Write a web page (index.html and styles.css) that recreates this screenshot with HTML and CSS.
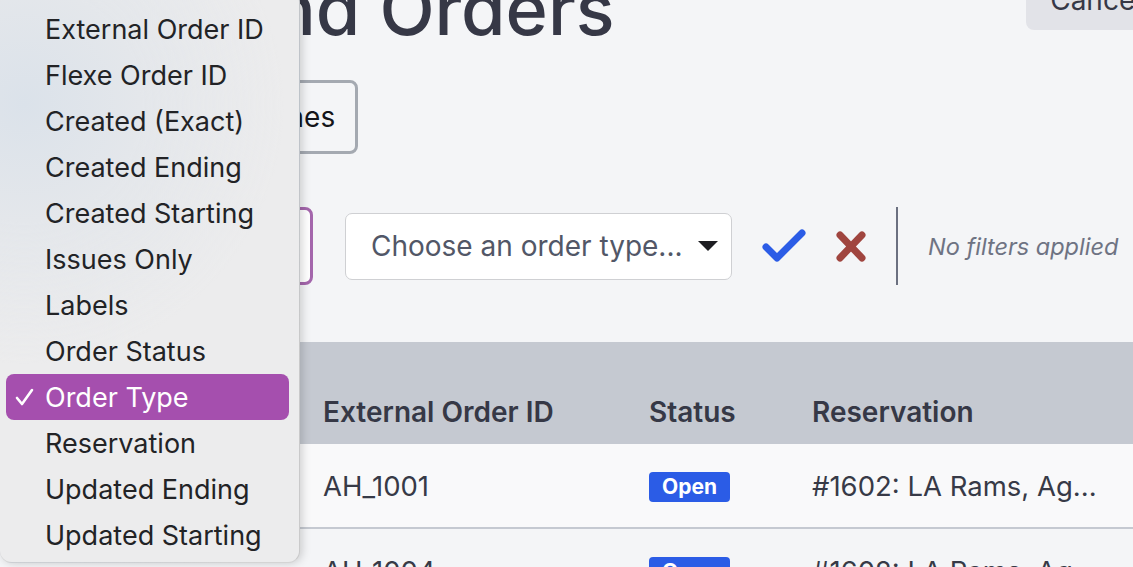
FILE: index.html
```html
<!DOCTYPE html>
<html lang="en">
<head>
<meta charset="utf-8">
<title>Outbound Orders</title>
<link rel="stylesheet" href="styles.css">
</head>
<body>
<div class="page">
  <header class="head">
    <h1 class="title">Outbound Orders</h1>
    <button class="btn-cancel">Cancel</button>
  </header>

  <div class="actions">
    <button class="btn-outline">Download Order Lines</button>
  </div>

  <div class="filters">
    <div class="select select-focus">
      <span class="caret"></span>
    </div>
    <div class="select">
      <span class="select-text">Choose an order type...</span>
      <span class="caret"></span>
    </div>
    <svg class="icon-check" width="44" height="34" viewBox="0 0 44 34" aria-label="Apply">
      <polyline points="4,18 15,29 40,4" fill="none" stroke="#2b5ce6" stroke-width="7" stroke-linecap="round" stroke-linejoin="round"/>
    </svg>
    <svg class="icon-x" width="30" height="31" viewBox="0 0 30 31" aria-label="Clear">
      <path d="M4 4 L26 27 M26 4 L4 27" fill="none" stroke="#a0453f" stroke-width="7" stroke-linecap="round"/>
    </svg>
    <div class="divider"></div>
    <span class="no-filters">No filters applied</span>
  </div>

  <div class="table">
    <div class="trow thead">
      <div class="cell"></div>
      <div class="cell">External Order ID</div>
      <div class="cell">Status</div>
      <div class="cell">Reservation</div>
    </div>
    <div class="trow odd">
      <div class="cell"></div>
      <div class="cell">AH_1001</div>
      <div class="cell"><span class="badge">Open</span></div>
      <div class="cell ellipsis">#1602: LA Rams, Ag...</div>
    </div>
    <div class="trow">
      <div class="cell"></div>
      <div class="cell">AH_1004</div>
      <div class="cell"><span class="badge">Open</span></div>
      <div class="cell ellipsis">#1602: LA Rams, Ag...</div>
    </div>
  </div>
</div>

<div class="menu">
  <div class="menu-item"><span class="mark"></span>External Order ID</div>
  <div class="menu-item"><span class="mark"></span>Flexe Order ID</div>
  <div class="menu-item"><span class="mark"></span>Created (Exact)</div>
  <div class="menu-item"><span class="mark"></span>Created Ending</div>
  <div class="menu-item"><span class="mark"></span>Created Starting</div>
  <div class="menu-item"><span class="mark"></span>Issues Only</div>
  <div class="menu-item"><span class="mark"></span>Labels</div>
  <div class="menu-item"><span class="mark"></span>Order Status</div>
  <div class="menu-item selected"><span class="mark"><svg width="19" height="18" viewBox="0 0 19 18"><polyline points="2,10 7,16 17,2" fill="none" stroke="#fff" stroke-width="2.6" stroke-linecap="round" stroke-linejoin="round"/></svg></span>Order Type</div>
  <div class="menu-item"><span class="mark"></span>Reservation</div>
  <div class="menu-item"><span class="mark"></span>Updated Ending</div>
  <div class="menu-item"><span class="mark"></span>Updated Starting</div>
</div>
</body>
</html>
```

FILE: styles.css
```css
* { box-sizing: border-box; }

html, body {
  margin: 0;
  height: 100%;
  overflow: hidden;
}

body {
  background: #f4f5f7;
  font-family: Inter, "Noto Sans", sans-serif;
  color: #363846;
  position: relative;
}

.page {
  width: 1180px;
  padding-left: 18px;
}

/* header */
.head {
  display: flex;
  align-items: flex-start;
  justify-content: space-between;
  margin-top: -27px;
  padding-right: 14px;
}

.title {
  margin: 0;
  font-size: 72px;
  line-height: 72px;
  font-weight: 500;
  color: #363846;
  white-space: nowrap;
}

.btn-cancel {
  margin-top: -3px;
  height: 60px;
  padding: 0 24px;
  border: none;
  border-radius: 8px;
  background: #e2e3e8;
  font-family: inherit;
  font-size: 28px;
  color: #363846;
}

/* actions */
.actions {
  display: flex;
  gap: 16px;
  margin-top: 35px;
}

.btn-outline {
  height: 74px;
  padding: 0 20px;
  border: 3px solid #a4a9b1;
  border-radius: 8px;
  background: transparent;
  font-family: inherit;
  font-size: 28px;
  color: #14151a;
}

/* filters */
.filters {
  display: flex;
  align-items: center;
  gap: 30px;
  margin-top: 53px;
  height: 78px;
}

.select {
  display: flex;
  align-items: center;
  justify-content: space-between;
  height: 67px;
  width: 387px;
  padding: 0 13px 0 25px;
  background: #fff;
  border: 1px solid #cfd0d3;
  border-radius: 7px;
  font-size: 28px;
  color: #525767;
}

.select-focus {
  width: 295px;
  height: 78px;
  border: 3px solid #a466ac;
  border-radius: 8px;
  margin-right: 2px;
  padding-right: 10px;
  justify-content: flex-end;
}

.caret {
  width: 0;
  height: 0;
  border-left: 10px solid transparent;
  border-right: 10px solid transparent;
  border-top: 10px solid #1d1e22;
}

.select-focus .caret {
  border-left-width: 4px;
  border-right-width: 4px;
  border-top-width: 4px;
}

.icon-check, .icon-x { flex: none; }

.divider {
  width: 2px;
  height: 78px;
  background: #6b7080;
}

.no-filters {
  font-size: 23.5px;
  font-style: italic;
  color: #6e7383;
}

/* table */
.table {
  margin-top: 57px;
}

.trow {
  display: grid;
  grid-template-columns: 282px 326px 163px 1fr;
  align-items: center;
  height: 85px;
  border-bottom: 2px solid #c5c9d1;
}

.trow.thead {
  height: 102px;
  align-items: end;
  padding-bottom: 17px;
  background: #c5c9d1;
  border-bottom: none;
  font-weight: 600;
}

.trow.odd { background: #f9f9fa; }

.cell {
  padding-left: 23px;
  font-size: 28px;
  line-height: 30px;
  white-space: nowrap;
  color: #373a47;
}

.trow:not(.thead) .cell { font-size: 27.5px; }

.thead .cell { color: #363846; }

.badge {
  display: inline-block;
  height: 30px;
  line-height: 30px;
  padding: 0 13px;
  border-radius: 4px;
  background: #2b5ce6;
  color: #fff;
  font-size: 21px;
  font-weight: 700;
  vertical-align: middle;
}

/* native select menu overlay */
.menu {
  position: absolute;
  left: 0;
  top: -10px;
  width: 300px;
  padding: 16px 10px 4px 6px;
  border-radius: 12px;
  background:
    radial-gradient(ellipse 260px 260px at 8% 20%, #dbe2ea 0%, #e4e7eb 45%, rgba(236,236,237,0) 100%),
    #ececed;
  border-right: 1px solid rgba(0,0,0,0.14);
  border-bottom: 1px solid rgba(0,0,0,0.10);
  box-shadow: 2px 0 10px rgba(0,0,0,0.18);
}

.menu-item {
  display: flex;
  align-items: center;
  height: 46px;
  padding-left: 9px;
  border-radius: 8px;
  font-size: 27px;
  color: #222326;
  white-space: nowrap;
}

.menu-item .mark {
  width: 30px;
  flex: none;
  display: flex;
  align-items: center;
}

.menu-item.selected {
  background: #a54fae;
  color: #fff;
}
```
